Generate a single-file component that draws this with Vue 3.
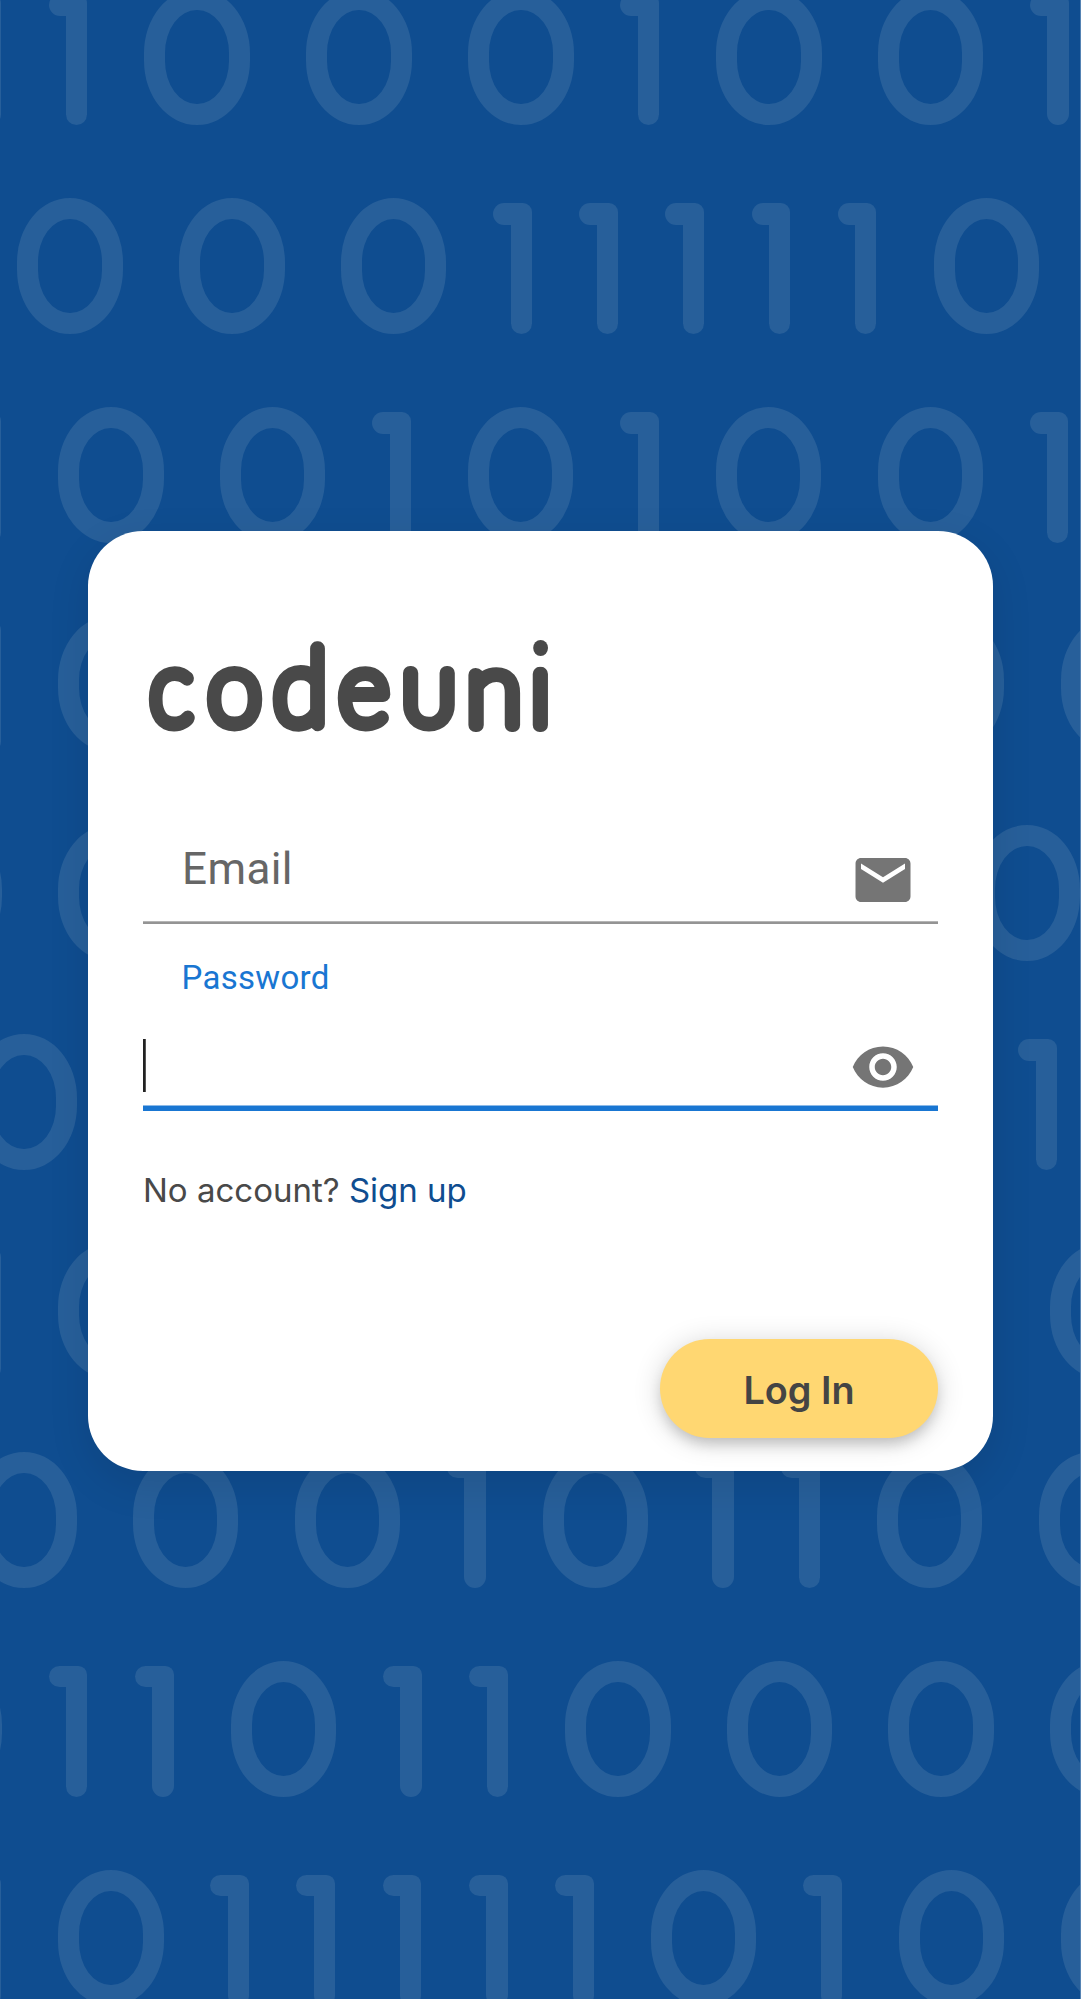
<script setup>
const rows = [
  { start: -56, digits: '110001001' },
  { start: -10.8, digits: '000111110' },
  { start: -56.2, digits: '100101001' },
  { start: -56.2, digits: '10011111100' },
  { start: -131.8, digits: '0000111110' },
  { start: -57, digits: '00100001' },
  { start: -56.2, digits: '1000011110' },
  { start: -57, digits: '000101100' },
  { start: -131.5, digits: '0110110000' },
  { start: -56.2, digits: '10111110100' },
]

const letters = [
  { ch: 'c', x: 6.4, y: 94.3, sx: 0.92, sy: 1.015 },
  { ch: 'o', x: 64.5, y: 94.3, sx: 0.982, sy: 1.015 },
  { ch: 'd', x: 130.3, y: 94.1, sx: 0.994, sy: 1.043 },
  { ch: 'e', x: 195.5, y: 94.3, sx: 0.979, sy: 1.015 },
  { ch: 'u', x: 259.3, y: 94.3, sx: 1.043, sy: 1.015, round: true },
  { ch: 'n', x: 323.1, y: 95.1, sx: 1.03, sy: 1.015 },
  { ch: 'i', x: 386.8, y: 95, sx: 1.02, sy: 1.035, clip: true },
]
</script>

<template>
  <main class="page">
    <div class="pattern" aria-hidden="true">
      <div v-for="(row, i) in rows" :key="i" class="row" :style="{ marginLeft: row.start + 'px' }">
        <span v-for="(d, j) in row.digits" :key="j" :class="d === '0' ? 'zero' : 'one'"></span>
      </div>
    </div>

    <form class="card" @submit.prevent>
      <svg class="logo" width="430" height="110" viewBox="0 0 430 110" role="img" aria-label="codeuni">
        <clipPath id="stem">
          <rect x="-5" y="-56.6" width="40" height="75" />
        </clipPath>
        <text
          v-for="l in letters"
          :key="l.ch"
          :class="{ round: l.round }"
          :clip-path="l.clip ? 'url(#stem)' : null"
          :transform="`translate(${l.x} ${l.y}) scale(${l.sx} ${l.sy})`"
        >{{ l.ch }}</text>
        <ellipse class="dot" cx="397.6" cy="18" rx="7.4" ry="8" />
      </svg>

      <div class="field email">
        <label>Email</label>
        <svg class="icon" viewBox="0 0 24 24">
          <path d="M20 4H4c-1.1 0-1.99.9-1.99 2L2 18c0 1.1.9 2 2 2h16c1.1 0 2-.9 2-2V6c0-1.1-.9-2-2-2zm0 4l-8 5-8-5V6l8 5 8-5v2z" />
        </svg>
      </div>

      <div class="field password">
        <label>Password</label>
        <div class="entry">
          <span class="caret"></span>
          <svg class="icon" viewBox="0 0 24 24">
            <path d="M12 4.5C7 4.5 2.73 7.61 1 12c1.73 4.39 6 7.5 11 7.5s9.27-3.11 11-7.5c-1.73-4.39-6-7.5-11-7.5zM12 17c-2.76 0-5-2.24-5-5s2.24-5 5-5 5 2.24 5 5-2.24 5-5 5zm0-8c-1.66 0-3 1.34-3 3s1.34 3 3 3 3-1.34 3-3-1.34-3-3-3z" />
          </svg>
        </div>
      </div>

      <p class="signup">No account? <a>Sign up</a></p>
      <button class="login" type="submit">Log In</button>
    </form>
  </main>
</template>

<style>
body {
  margin: 0;
}
</style>

<style scoped>
.page {
  box-sizing: border-box;
  width: 1081px;
  height: 1999px;
  display: grid;
  overflow: hidden;
  background: #0f4d90;
  border-right: 1px solid #5583b3;
}

.pattern,
.card {
  grid-area: 1 / 1;
}

.pattern {
  width: 1080px;
  height: 1999px;
  overflow: hidden;
}

.row {
  display: flex;
  align-items: flex-end;
  width: max-content;
  height: 136.4px;
  margin-bottom: 72.6px;
}

.row:first-child {
  height: 125.1px;
}

.zero {
  box-sizing: border-box;
  flex: none;
  width: 105.6px;
  height: 136.4px;
  margin: 0 28.1px;
  border: 21.5px solid #275f9a;
  border-radius: 52.8px / 64px;
}

.one {
  flex: none;
  display: flex;
  flex-direction: column;
  align-items: flex-end;
  width: 38.8px;
  height: 131px;
  margin: 0 29px 0 18.4px;
}

.one::before {
  content: '';
  width: 38.8px;
  height: 21.5px;
  border-radius: 11px 9px 0 11px;
  background: #275f9a;
}

.one::after {
  content: '';
  width: 21.2px;
  height: 109.5px;
  border-radius: 0 0 11px 11px;
  background: #275f9a;
}

.card {
  box-sizing: border-box;
  width: 905px;
  height: 940.6px;
  margin: 530.7px 0 0 88px;
  padding: 99.3px 55px 0;
  display: flex;
  flex-direction: column;
  align-items: stretch;
  border-radius: 55px;
  background: #fff;
  box-shadow: 0 13px 42px rgba(0, 0, 0, 0.1);
}

.logo {
  flex: none;
  display: block;
  overflow: visible;
}

.logo text {
  font: 100 100px Lato, sans-serif;
  fill: #494949;
  stroke: #494949;
  stroke-width: 13.7px;
  stroke-linejoin: round;
  stroke-linecap: round;
}

.logo .round {
  font-size: 71px;
  text-transform: uppercase;
}

.dot {
  fill: #494949;
}

.field {
  box-sizing: border-box;
  flex: none;
  font-family: Roboto, sans-serif;
}

.email {
  display: flex;
  justify-content: space-between;
  height: 110px;
  margin-top: 74px;
  padding-top: 28px;
  background: linear-gradient(#b5b5b5 0 1px, #949494 1px) bottom / 100% 3px no-repeat;
}

.email label {
  margin: 1px 0 0 39px;
  font-size: 44px;
  line-height: 52px;
  letter-spacing: 0.4px;
  color: #666;
}

.icon {
  flex: none;
  width: 66px;
  height: 66px;
  margin-right: 22.4px;
  fill: #757575;
}

.email .icon {
  margin-top: 5px;
}

.password {
  height: 187px;
  padding-top: 35px;
  background: linear-gradient(#8cbae8 0 1px, #1976d2 1px) bottom / 100% 6px no-repeat;
}

.password label {
  display: block;
  margin-left: 38.5px;
  font-size: 33px;
  line-height: 38px;
  letter-spacing: 0.3px;
  color: #1976d2;
}

.entry {
  display: flex;
  justify-content: space-between;
  align-items: center;
  height: 66px;
  margin-top: 37px;
}

.caret {
  width: 3px;
  height: 53px;
  margin-bottom: 2px;
  background: linear-gradient(90deg, #222 2px, #555 2px);
}

.signup {
  flex: none;
  margin: 59px 0 0;
  font: 400 33px/40px Inter, sans-serif;
  color: #494949;
}

.signup a {
  color: #0f4d90;
}

.login {
  flex: none;
  align-self: flex-end;
  width: 278px;
  height: 99px;
  margin-top: 129.2px;
  padding: 2px 0 0;
  border: 0;
  border-radius: 49.5px;
  background: #ffd772;
  box-shadow: 0 8.25px 13.75px -2.75px rgba(0, 0, 0, 0.18), 0 2.75px 27.5px rgba(0, 0, 0, 0.16);
  font: 600 37.8px/46px Inter, sans-serif;
  color: #444;
}
</style>
